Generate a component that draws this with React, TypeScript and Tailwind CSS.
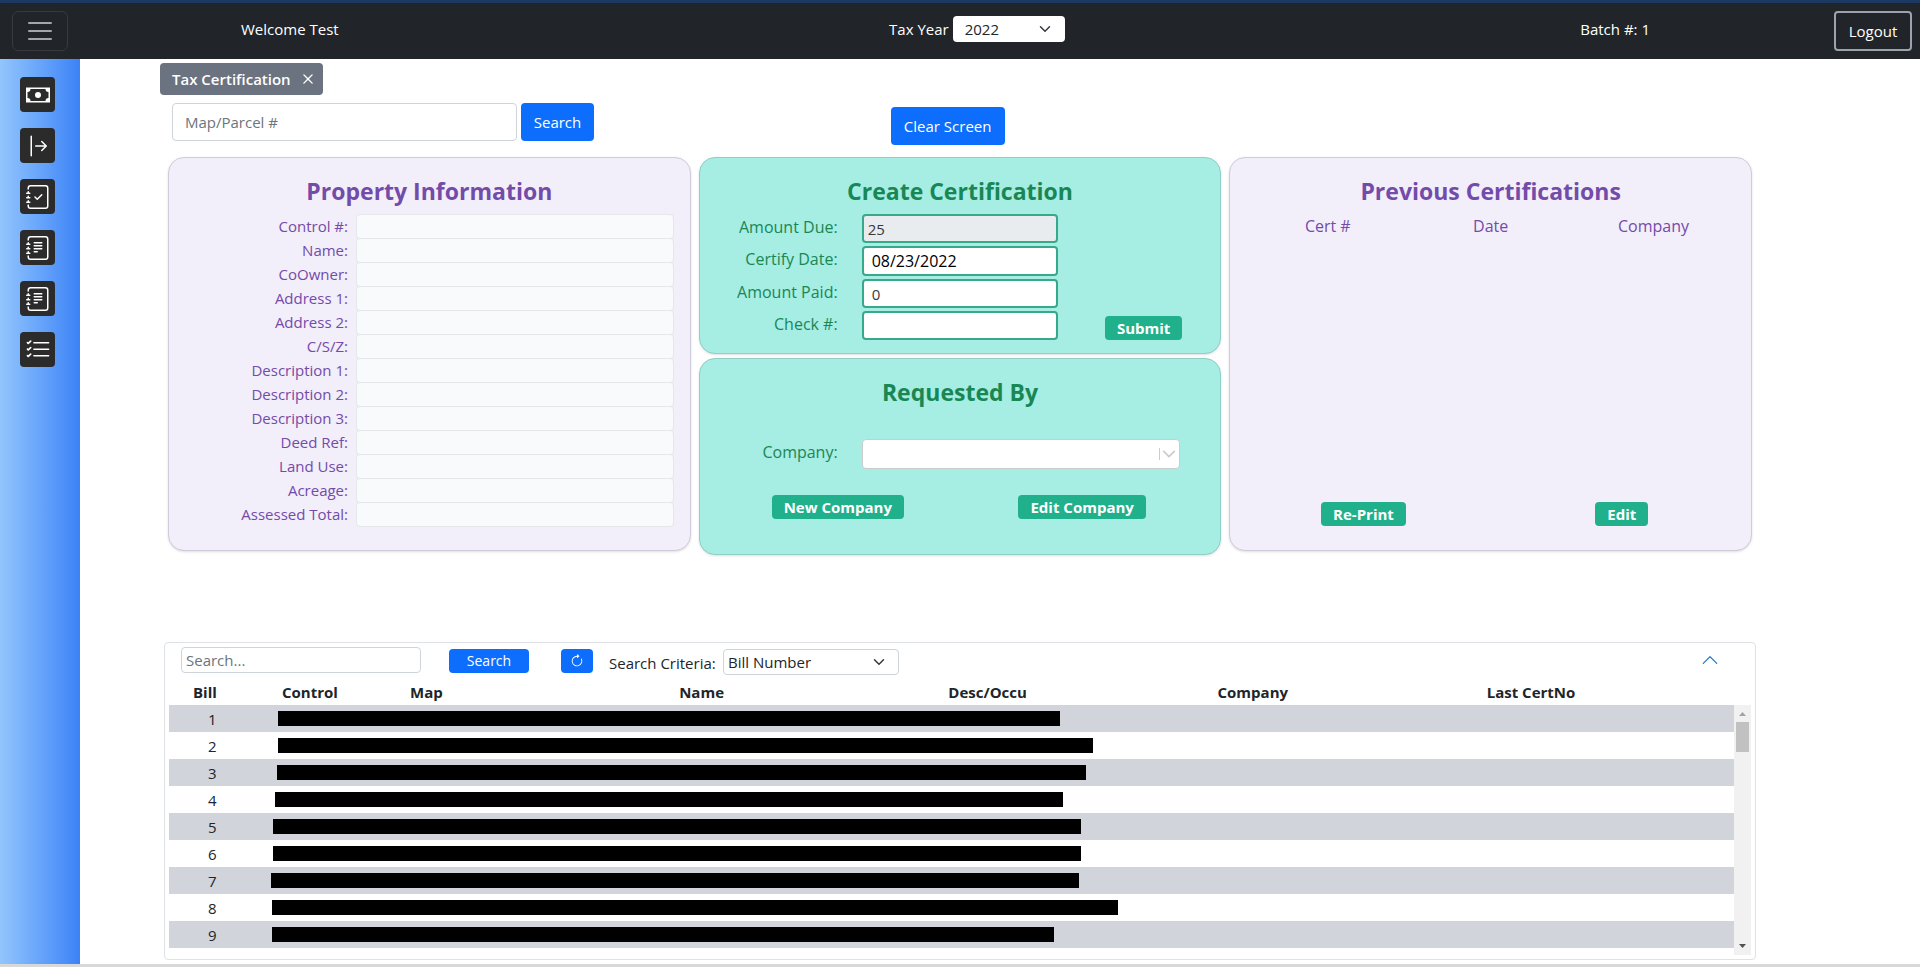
import React from 'react';
import { BsArrowBarRight, BsJournalCheck, BsJournalText, BsListCheck, BsArrowClockwise, BsX, BsChevronUp } from 'react-icons/bs';

const navItems = [
  { label: 'Payments', icon: 'cash' },
  { label: 'Transfer', icon: 'arrow' },
  { label: 'Certifications', icon: 'check' },
  { label: 'Journal', icon: 'text' },
  { label: 'Reports', icon: 'text' },
  { label: 'Tasks', icon: 'list' },
];

const propertyFields = [
  'Control #', 'Name', 'CoOwner', 'Address 1', 'Address 2', 'C/S/Z', 'Description 1',
  'Description 2', 'Description 3', 'Deed Ref', 'Land Use', 'Acreage', 'Assessed Total',
];

// start and length of the blacked out part of each bill
const bills = [
  { bill: 1, start: 0, length: 782 },
  { bill: 2, start: 0, length: 815 },
  { bill: 3, start: -1, length: 809 },
  { bill: 4, start: -3, length: 788 },
  { bill: 5, start: -5, length: 808 },
  { bill: 6, start: -5, length: 808 },
  { bill: 7, start: -7, length: 808 },
  { bill: 8, start: -6, length: 846 },
  { bill: 9, start: -6, length: 782 },
];

const renderIcon = (name: string) => {
  switch (name) {
    case 'cash':
      return (
        <svg viewBox="0 0 16 16" fill="currentColor" className="w-6 h-6">
          <path fillRule="evenodd" d="M0 3h16v10H0zM3 4a2 2 0 0 1-2 2v4a2 2 0 0 1 2 2h10a2 2 0 0 1 2-2V6a2 2 0 0 1-2-2z" />
          <circle cx="8" cy="8" r="2" />
        </svg>
      );
    case 'arrow':
      return <BsArrowBarRight className="w-6 h-6" />;
    case 'check':
      return <BsJournalCheck className="w-6 h-6" />;
    case 'text':
      return <BsJournalText className="w-6 h-6" />;
    case 'list':
      return <BsListCheck className="w-[26px] h-[26px]" />;
    default:
      return null;
  }
};

const Chevron = ({ className }: { className: string }) => (
  <svg viewBox="0 0 16 16" fill="none" stroke="currentColor" strokeWidth="2" strokeLinecap="round" strokeLinejoin="round" className={className}>
    <path d="m2 5 6 6 6-6" />
  </svg>
);

const GreenButton = ({ children }: { children: React.ReactNode }) => (
  <button type="button" className="h-6 px-3 rounded bg-[#20b08b] text-white text-[15px] leading-6 font-bold">
    {children}
  </button>
);

const purpleCard = 'h-[394px] rounded-2xl border border-[#d0cbda] bg-[#f2eefa] text-[#734ba9] shadow-sm px-4 pt-[17px]';
const greenCard = 'h-[197px] rounded-2xl border border-[#8fd0c6] bg-[#a6ede4] text-[#198754] shadow-sm px-4 pt-[17px]';
const cardTitle = 'text-[23px] leading-8 font-bold text-center';
const greenLabel = 'w-[122px] pb-1 text-right text-base leading-6 font-medium whitespace-nowrap';
const greenInput = 'w-[196px] rounded border-2 border-[#37a88a] bg-white';

const Header = () => (
  <header className="h-[59px] bg-[#212529] border-t-[3px] border-[#1c3963] text-white flex items-start pl-3 pr-2">
    <button type="button" aria-label="Toggle navigation" className="mt-2 w-14 h-10 shrink-0 rounded-md border border-[#373b3e] flex items-center justify-center">
      <svg viewBox="0 0 30 30" className="w-[30px] h-[30px]" stroke="#a4a6a8" strokeWidth="2" strokeLinecap="round">
        <path d="M4 7h22M4 15h22M4 23h22" />
      </svg>
    </button>
    <div className="flex-1 mt-2 h-9 flex items-center">
      <p className="w-[38%] pl-[173px]">Welcome Test</p>
      <div className="flex-1 flex items-center pl-[150px]">
        <label htmlFor="taxYear">Tax Year</label>
        <div className="relative ml-1">
          <select id="taxYear" defaultValue="2022" className="appearance-none block w-28 h-[26px] rounded bg-white text-[#212529] pl-3">
            <option>2022</option>
          </select>
          <Chevron className="absolute right-3.5 top-[7px] w-3 h-3 text-[#343a40] pointer-events-none" />
        </div>
      </div>
      <p className="pr-[184px]">Batch #: 1</p>
    </div>
    <button type="button" className="mt-2 h-10 w-[78px] rounded border-2 border-[#9da3ae]">Logout</button>
  </header>
);

const Sidebar = () => (
  <nav className="w-20 shrink-0 bg-linear-to-r from-[#93c5fd] to-[#3b82f6] pt-[18px] pl-5 flex flex-col gap-4">
    {navItems.map((item, index) => (
      <button key={index} type="button" aria-label={item.label} className="w-[35px] h-[35px] rounded bg-[#2b2b2b] text-white flex items-center justify-center">
        {renderIcon(item.icon)}
      </button>
    ))}
  </nav>
);

const PropertyInformation = () => (
  <section className={purpleCard}>
    <h2 className={cardTitle}>Property Information</h2>
    <div className="mt-[7px]">
      {propertyFields.map((field, index) => (
        <div key={field} className="h-6 flex items-center gap-2">
          <label htmlFor={`property-${index}`} className="w-[163px] text-right">{field}:</label>
          <input id={`property-${index}`} readOnly className="flex-1 min-w-0 h-[25px] rounded border border-[#e5e7eb] bg-[#f9fafc] px-2" />
        </div>
      ))}
    </div>
  </section>
);

const CreateCertification = () => (
  <section className={greenCard}>
    <h2 className={cardTitle}>Create Certification</h2>
    <div className="flex items-end mt-[7px]">
      <div className="flex flex-col gap-[3px]">
        <div className="flex items-center gap-6">
          <label htmlFor="amountDue" className={greenLabel}>Amount Due:</label>
          <input id="amountDue" readOnly defaultValue="25" className="w-[196px] h-[29px] rounded border-2 border-[#37a88a] bg-[#e9ecef] px-1 text-[#343a40]" />
        </div>
        <div className="flex items-center gap-6">
          <label htmlFor="certifyDate" className={greenLabel}>Certify Date:</label>
          <input id="certifyDate" defaultValue="08/23/2022" className={`${greenInput} h-[30px] px-2 text-base font-medium text-black`} />
        </div>
        <div className="flex items-center gap-6">
          <label htmlFor="amountPaid" className={greenLabel}>Amount Paid:</label>
          <input id="amountPaid" defaultValue="0" className={`${greenInput} h-[29px] px-2 text-[#343a40]`} />
        </div>
        <div className="flex items-center gap-6">
          <label htmlFor="checkNo" className={greenLabel}>Check #:</label>
          <input id="checkNo" className={`${greenInput} h-[29px] px-2`} />
        </div>
      </div>
      <div className="flex-1 flex justify-end pr-[22px]">
        <GreenButton>Submit</GreenButton>
      </div>
    </div>
  </section>
);

const RequestedBy = () => (
  <section className={greenCard}>
    <h2 className={cardTitle}>Requested By</h2>
    <div className="mt-[31px] flex items-center gap-6">
      <label htmlFor="company" className={greenLabel}>Company:</label>
      <div className="relative flex-1 mr-6">
        <select id="company" className="appearance-none block w-full h-[30px] rounded border border-[#cccccc] bg-white px-2" />
        <span className="absolute right-5 top-[9px] w-px h-3 bg-[#cccccc]" />
        <Chevron className="absolute right-1 top-2 w-3.5 h-3.5 text-[#cccccc] pointer-events-none" />
      </div>
    </div>
    <div className="mt-[26px] grid grid-cols-2 justify-items-center">
      <GreenButton>New Company</GreenButton>
      <GreenButton>Edit Company</GreenButton>
    </div>
  </section>
);

const PreviousCertifications = () => (
  <section className={`${purpleCard} flex flex-col`}>
    <h2 className={cardTitle}>Previous Certifications</h2>
    <table className="w-full table-fixed mt-[7px] text-base leading-6">
      <thead>
        <tr>
          <th className="p-0 font-medium">Cert #</th>
          <th className="p-0 font-medium">Date</th>
          <th className="p-0 font-medium">Company</th>
        </tr>
      </thead>
    </table>
    <div className="mt-auto mb-6 -ml-3 -mr-4 grid grid-cols-2 justify-items-center">
      <GreenButton>Re-Print</GreenButton>
      <GreenButton>Edit</GreenButton>
    </div>
  </section>
);

const BillSearch = () => (
  <section className="mt-[87px] -mx-1 h-[318px] rounded border border-[#dee2e6] px-1">
    <div className="h-9 pt-1 pl-3 flex items-start">
      <input aria-label="Search bills" placeholder="Search..." className="w-60 h-[26px] rounded border border-[#ced4da] px-1 placeholder:text-[#6c757d]" />
      <button type="button" className="ml-7 mt-0.5 w-20 h-6 rounded bg-[#0d6efd] text-white text-sm">Search</button>
      <button type="button" aria-label="Refresh" className="ml-8 mt-0.5 w-8 h-6 rounded bg-[#0d6efd] text-white flex items-center justify-center">
        <BsArrowClockwise className="w-3.5 h-3.5" />
      </button>
      <label htmlFor="criteria" className="ml-4 w-[106px] h-8 leading-8 whitespace-nowrap">Search Criteria:</label>
      <div className="relative ml-2 mt-0.5">
        <select id="criteria" defaultValue="Bill Number" className="appearance-none block w-44 h-[26px] rounded border border-[#ced4da] bg-white pl-1">
          <option>Bill Number</option>
        </select>
        <Chevron className="absolute right-3.5 top-[7px] w-3 h-3 text-[#343a40] pointer-events-none" />
      </div>
      <button type="button" aria-label="Collapse" className="ml-auto mr-8 mt-1 text-[#1d6fc4]">
        <BsChevronUp className="w-[18px] h-[18px]" />
      </button>
    </div>
    <div className="flex items-start">
      <table className="flex-1 w-full table-fixed text-left">
        <colgroup>
          <col className="w-[113px]" />
          <col className="w-[128px]" />
          <col className="w-[17.2%]" />
          <col className="w-[17.2%]" />
          <col className="w-[17.2%]" />
          <col className="w-[17.2%]" />
          <col />
        </colgroup>
        <thead>
          <tr className="h-[26px]">
            <th className="p-0 pl-6 font-bold">Bill</th>
            <th className="p-0 font-bold">Control</th>
            <th className="p-0 font-bold">Map</th>
            <th className="p-0 font-bold">Name</th>
            <th className="p-0 font-bold">Desc/Occu</th>
            <th className="p-0 font-bold">Company</th>
            <th className="p-0 font-bold">Last CertNo</th>
          </tr>
        </thead>
        <tbody>
          {bills.map((row) => (
            <tr key={row.bill} className="h-[27px] odd:bg-[#d1d4db]">
              <td className="p-0 pl-[39px]">{row.bill}</td>
              <td colSpan={6} className="p-0">
                <div className="h-[15px] bg-black" style={{ marginLeft: row.start - 4, width: row.length }} />
              </td>
            </tr>
          ))}
        </tbody>
      </table>
      <div aria-hidden="true" className="mt-[26px] w-[17px] h-[250px] shrink-0 bg-[#f1f1f1] flex flex-col items-center">
        <svg viewBox="0 0 17 17" className="w-[17px] h-[17px]" fill="#a3a3a3"><path d="M5 11h7L8.500 7z" /></svg>
        <div className="w-[13px] h-[30px] bg-[#c1c1c1]" />
        <svg viewBox="0 0 17 17" className="w-[17px] h-[17px] mt-auto" fill="#505050"><path d="M5 6h7l-3.500 4z" /></svg>
      </div>
    </div>
  </section>
);

const App: React.FC = () => {
  return (
    <div className="min-h-screen flex flex-col bg-white border-b-[3px] border-[#d8d8d8] text-[#212529] text-[15px] leading-6 font-['Open_Sans','Noto_Sans',sans-serif]">
      <Header />
      <div className="flex-1 flex">
        <Sidebar />
        <main className="flex-1 min-w-0 pl-[88px] pr-[168px] pt-1 pb-1">
          <div className="-ml-2 w-[163px] h-8 rounded bg-[#6b7280] text-white flex items-center justify-between pl-3 pr-1">
            <span className="font-semibold">Tax Certification</span>
            <button type="button" aria-label="Close tab"><BsX className="w-[22px] h-[22px]" /></button>
          </div>
          <div className="mt-2 grid grid-cols-3 gap-2">
            <form className="pl-1 flex gap-1">
              <input aria-label="Map/Parcel #" placeholder="Map/Parcel #" className="w-[345px] h-[38px] rounded border border-[#ced4da] px-3 placeholder:text-[#6c757d]" />
              <button type="button" className="h-[38px] w-[73px] rounded bg-[#0d6efd] text-white">Search</button>
            </form>
            <div className="pt-1 pl-[192px]">
              <button type="button" className="block h-[38px] w-[114px] rounded bg-[#0d6efd] text-white">Clear Screen</button>
            </div>
          </div>
          <div className="mt-3 grid grid-cols-3 gap-2 items-start">
            <PropertyInformation />
            <div className="flex flex-col gap-1">
              <CreateCertification />
              <RequestedBy />
            </div>
            <PreviousCertifications />
          </div>
          <BillSearch />
        </main>
      </div>
    </div>
  );
};

export default App;
